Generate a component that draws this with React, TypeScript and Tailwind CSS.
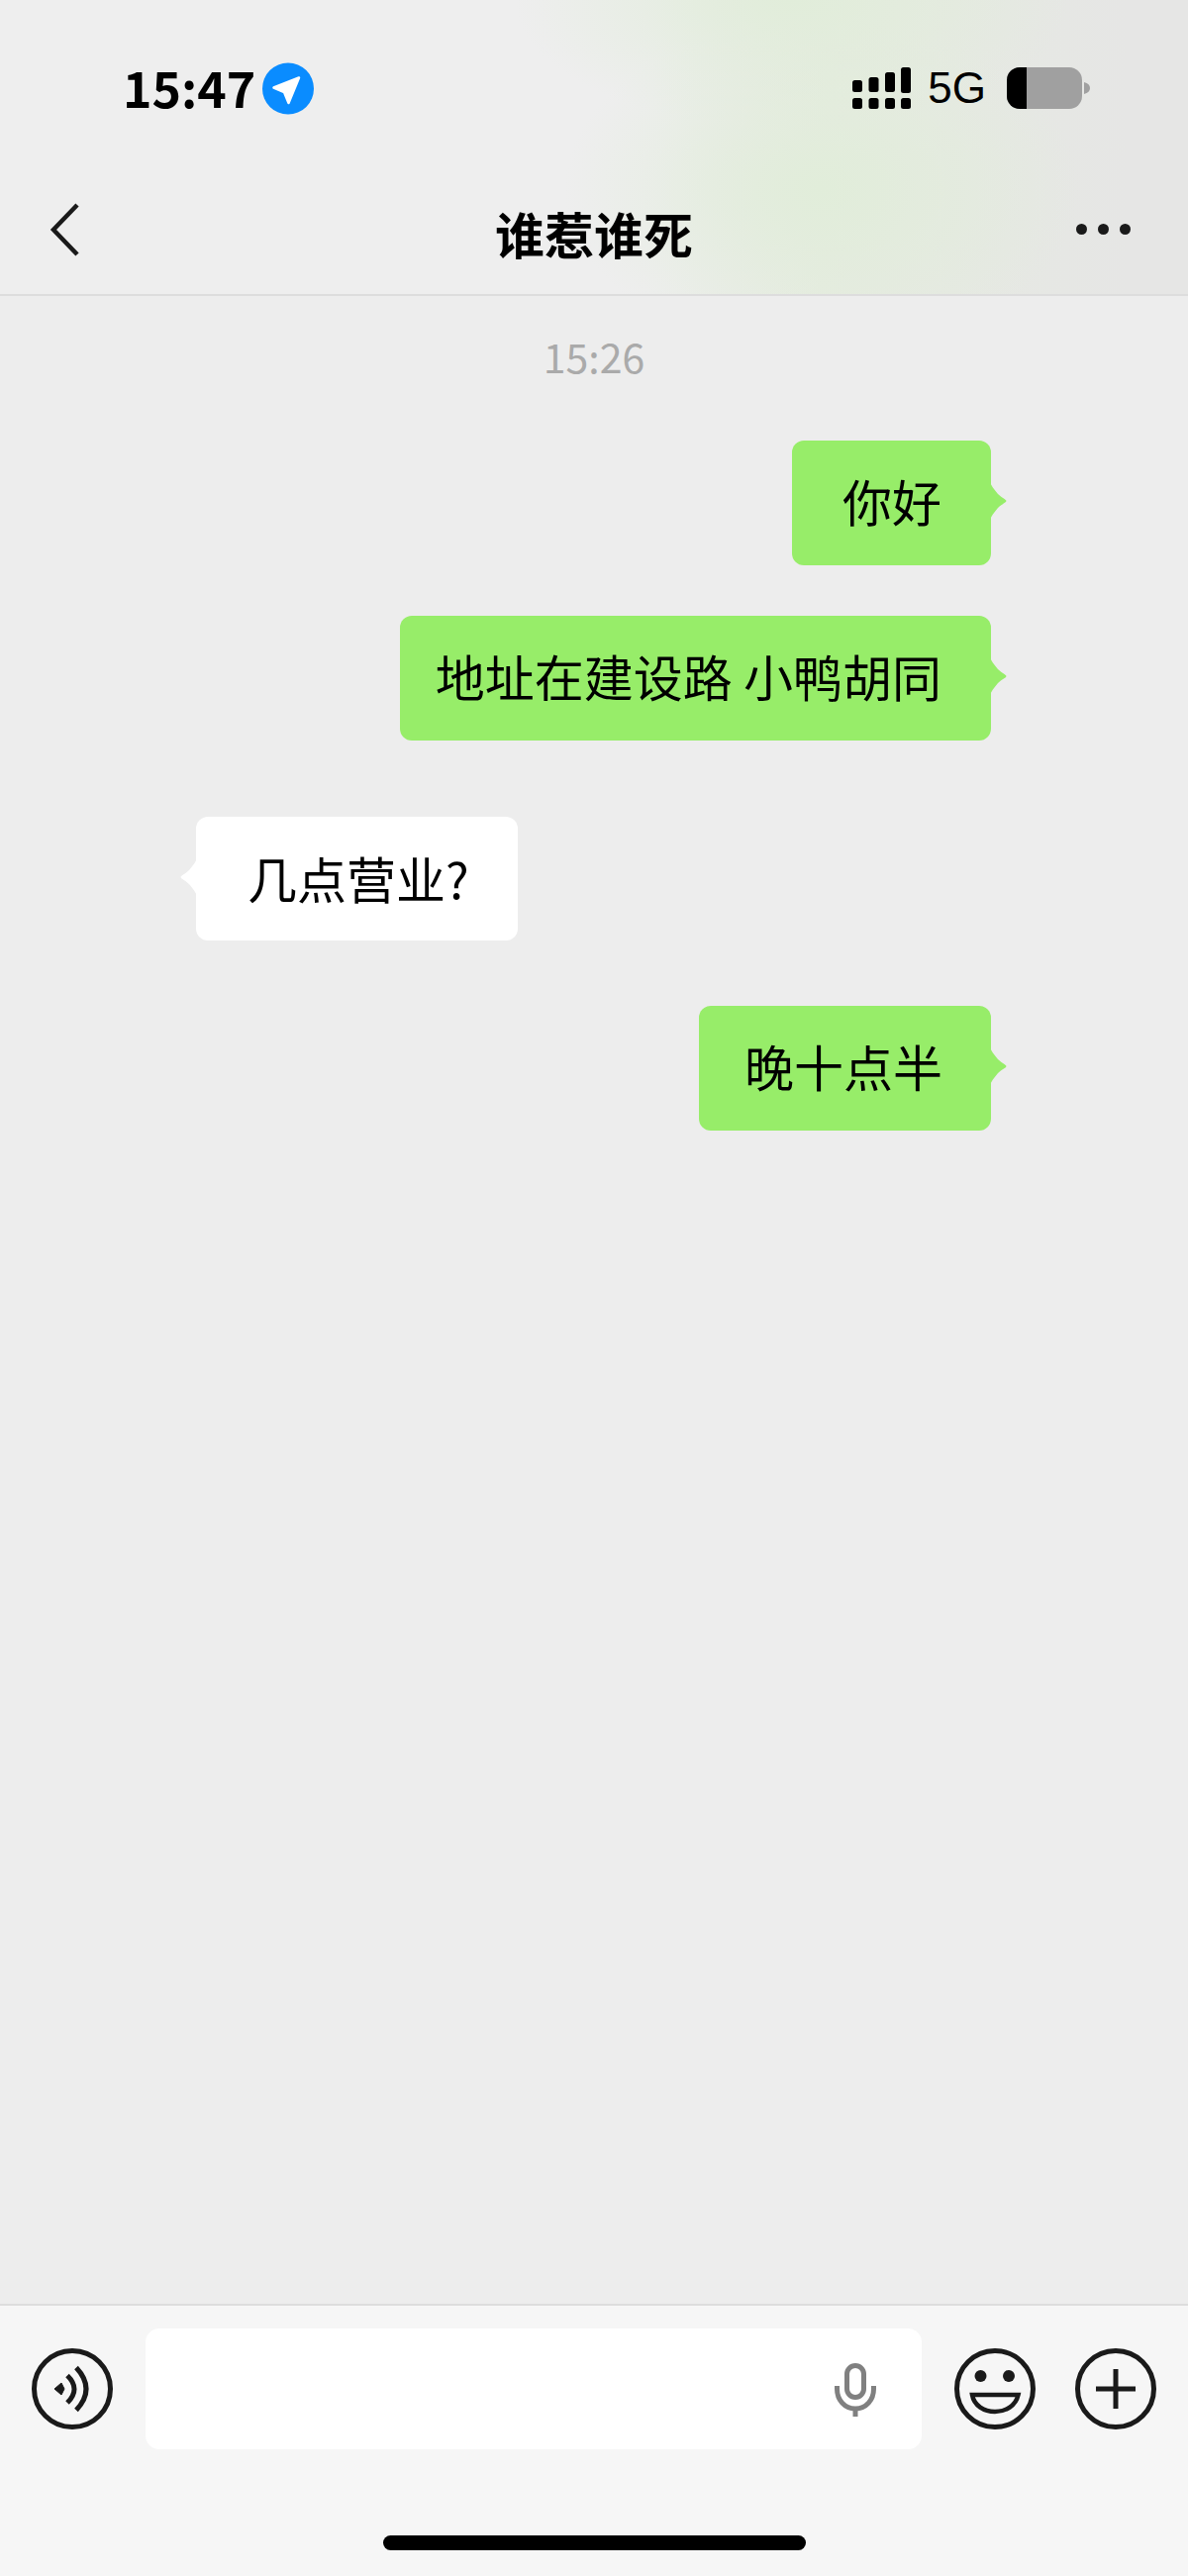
const Tail = ({ side, fill }: { side: "left" | "right"; fill: string }) => (
  <svg
    viewBox="0 0 17 40"
    className={
      side === "right"
        ? "absolute top-[41px] right-[-16px] h-[40px] w-[17px]"
        : "absolute top-[41px] left-[-16px] h-[40px] w-[17px] -scale-x-100"
    }
  >
    <path d="M0 0 C1 5 4 8 8 13 C12 17 16 18 16.5 20 C16 22 12 23 8 27 C4 32 1 35 0 40 Z" fill={fill} />
  </svg>
);

const SentBubble = ({ text, className }: { text: string; className: string }) => (
  <div className="flex justify-end pr-[199px]">
    <div className={`relative flex h-[126px] items-center rounded-xl bg-[#97ed69] pb-[6px] ${className}`}>
      <span className="whitespace-nowrap">{text}</span>
      <Tail side="right" fill="#97ed69" />
    </div>
  </div>
);

const StatusBar = () => (
  <div className="flex h-[176px] items-start justify-between pt-[63px] pl-[124px] pr-[99px]">
    <div className="flex items-center gap-[7px]">
      <span className="-mt-[5px] text-[50px] leading-[53px] font-bold text-black">15:47</span>
      <svg viewBox="0 0 52 53" className="h-[53px] w-[52px]">
        <circle cx="26" cy="26.5" r="26" fill="#0a8cff" />
        <path d="M37 15.5 L11.5 25.5 L22 30 L26.5 41 Z" fill="#fff" stroke="#fff" strokeWidth="2.5" strokeLinejoin="round" />
      </svg>
    </div>
    <div className="flex items-center pt-[5px]">
      <svg viewBox="0 0 60 42" className="h-[42px] w-[60px]" fill="#000">
        <rect x="0" y="13" width="10" height="12" rx="2.5" />
        <rect x="16.5" y="10" width="10" height="15" rx="2.5" />
        <rect x="33" y="5" width="10" height="20" rx="2.5" />
        <rect x="49" y="0" width="10" height="26" rx="2.5" />
        <rect x="0" y="31" width="10" height="11" rx="2.5" />
        <rect x="16.5" y="31" width="10" height="11" rx="2.5" />
        <rect x="33" y="31" width="10" height="11" rx="2.5" />
        <rect x="49" y="31" width="10" height="11" rx="2.5" />
      </svg>
      <span className="ml-[16px] font-['Liberation_Sans',sans-serif] text-[44px] leading-[42px] text-black">5G</span>
      <div className="ml-[21px] flex h-[42px] w-[76px] overflow-hidden rounded-[13px] bg-[#a0a0a0]">
        <div className="h-full w-[20px] bg-black" />
      </div>
      <svg viewBox="0 0 6 12" className="ml-[2px] h-[12px] w-[6px]">
        <path d="M0 0 C4 1 6 3 6 6 C6 9 4 11 0 12 Z" fill="#a0a0a0" />
      </svg>
    </div>
  </div>
);

const NavBar = () => (
  <div className="flex h-[123px] items-start border-b-2 border-[#dddddd] px-[50px]">
    <div className="flex-1">
      <svg viewBox="0 0 30 54" className="mt-[29px] h-[54px] w-[30px]" fill="none">
        <path d="M28 2 L4 27 L28 52" stroke="#1a1a1a" strokeWidth="4.5" />
      </svg>
    </div>
    <span className="mt-[30px] text-[50px] leading-[58px] font-bold text-black">谁惹谁死</span>
    <div className="flex flex-1 justify-end">
      <div className="mt-[50px] mr-[8px] flex gap-[11px]">
        <span className="h-[11px] w-[11px] rounded-full bg-[#1a1a1a]" />
        <span className="h-[11px] w-[11px] rounded-full bg-[#1a1a1a]" />
        <span className="h-[11px] w-[11px] rounded-full bg-[#1a1a1a]" />
      </div>
    </div>
  </div>
);

const InputBar = () => (
  <div className="relative mt-auto h-[275px] border-t-2 border-[#dddddd] bg-[#f6f6f6]">
    <div className="flex items-center pt-[23px] pl-[32px]">
      <svg viewBox="0 0 82 82" className="h-[82px] w-[82px]" fill="none" stroke="#1a1a1a">
        <circle cx="41" cy="41" r="38.5" strokeWidth="5" />
        <path d="M23 41 L30 35 L33 41 L30 47 Z" fill="#1a1a1a" strokeWidth="1" />
        <path d="M36 27.5 Q50 41 36 55" strokeWidth="5" />
        <path d="M45 19.5 Q65 41 45 62.5" strokeWidth="5" />
      </svg>
      <div className="ml-[33px] flex h-[122px] w-[784px] items-start justify-end rounded-[14px] bg-white pt-[35px] pr-[46px]">
        <svg viewBox="0 0 42 54" className="h-[54px] w-[42px]" fill="none" stroke="#808080" strokeWidth="5">
          <rect x="12.5" y="2.5" width="17" height="32" rx="8.5" />
          <path d="M2.5 23 V26 C2.5 37 10 46 21 46 C32 46 39.5 37 39.5 26 V23" />
          <path d="M21 46 V54" />
        </svg>
      </div>
      <svg viewBox="0 0 82 82" className="ml-[33px] h-[82px] w-[82px]" fill="none" stroke="#1a1a1a">
        <circle cx="41" cy="41" r="38.5" strokeWidth="5" />
        <circle cx="26.5" cy="28" r="6" fill="#1a1a1a" stroke="none" />
        <circle cx="55" cy="28" r="6" fill="#1a1a1a" stroke="none" />
        <path d="M18 47 H64.5 C62 58 52 64 41 64 C30 64 20 58 18 47 Z" strokeWidth="4.5" />
      </svg>
      <svg viewBox="0 0 82 82" className="ml-[40px] h-[82px] w-[82px]" fill="none" stroke="#1a1a1a">
        <circle cx="41" cy="41" r="38.5" strokeWidth="5" />
        <path d="M21 41 H61 M41 21 V61" strokeWidth="5" />
      </svg>
    </div>
    <div className="mx-auto mt-[87px] h-[15px] w-[427px] rounded-full bg-black" />
  </div>
);

export default function App() {
  return (
    <div className="flex h-[2602px] w-[1200px] flex-col overflow-hidden bg-[#ededed] font-['Noto_Sans_CJK_SC','Noto_Sans',sans-serif] text-[50px] text-black">
      <div className="bg-[#eeeeee] bg-[radial-gradient(ellipse_260px_170px_at_830px_190px,#e1edda_0%,#e1edda00_100%),radial-gradient(ellipse_280px_130px_at_800px_0px,#e1edda_0%,#e1edda00_100%),linear-gradient(90deg,#eeeeee_55%,#e6ebe1_69%,#e6e6e5_95%)]">
        <StatusBar />
        <NavBar />
      </div>
      <div className="pt-[35px] text-center text-[41px] leading-[50px] text-[#aaaaaa]">15:26</div>
      <div className="mt-[61px]">
        <SentBubble text="你好" className="pl-[51px] pr-[50px]" />
      </div>
      <div className="mt-[51px]">
        <SentBubble text="地址在建设路 小鸭胡同" className="pl-[36px] pr-[50px]" />
      </div>
      <div className="mt-[77px] flex pl-[198px]">
        <div className="relative flex h-[125px] items-center rounded-xl bg-white pb-[2px] pl-[52px] pr-[49px]">
          <span className="whitespace-nowrap">几点营业?</span>
          <Tail side="left" fill="#ffffff" />
        </div>
      </div>
      <div className="mt-[66px]">
        <SentBubble text="晚十点半" className="pl-[46px] pr-[49px]" />
      </div>
      <InputBar />
    </div>
  );
}
